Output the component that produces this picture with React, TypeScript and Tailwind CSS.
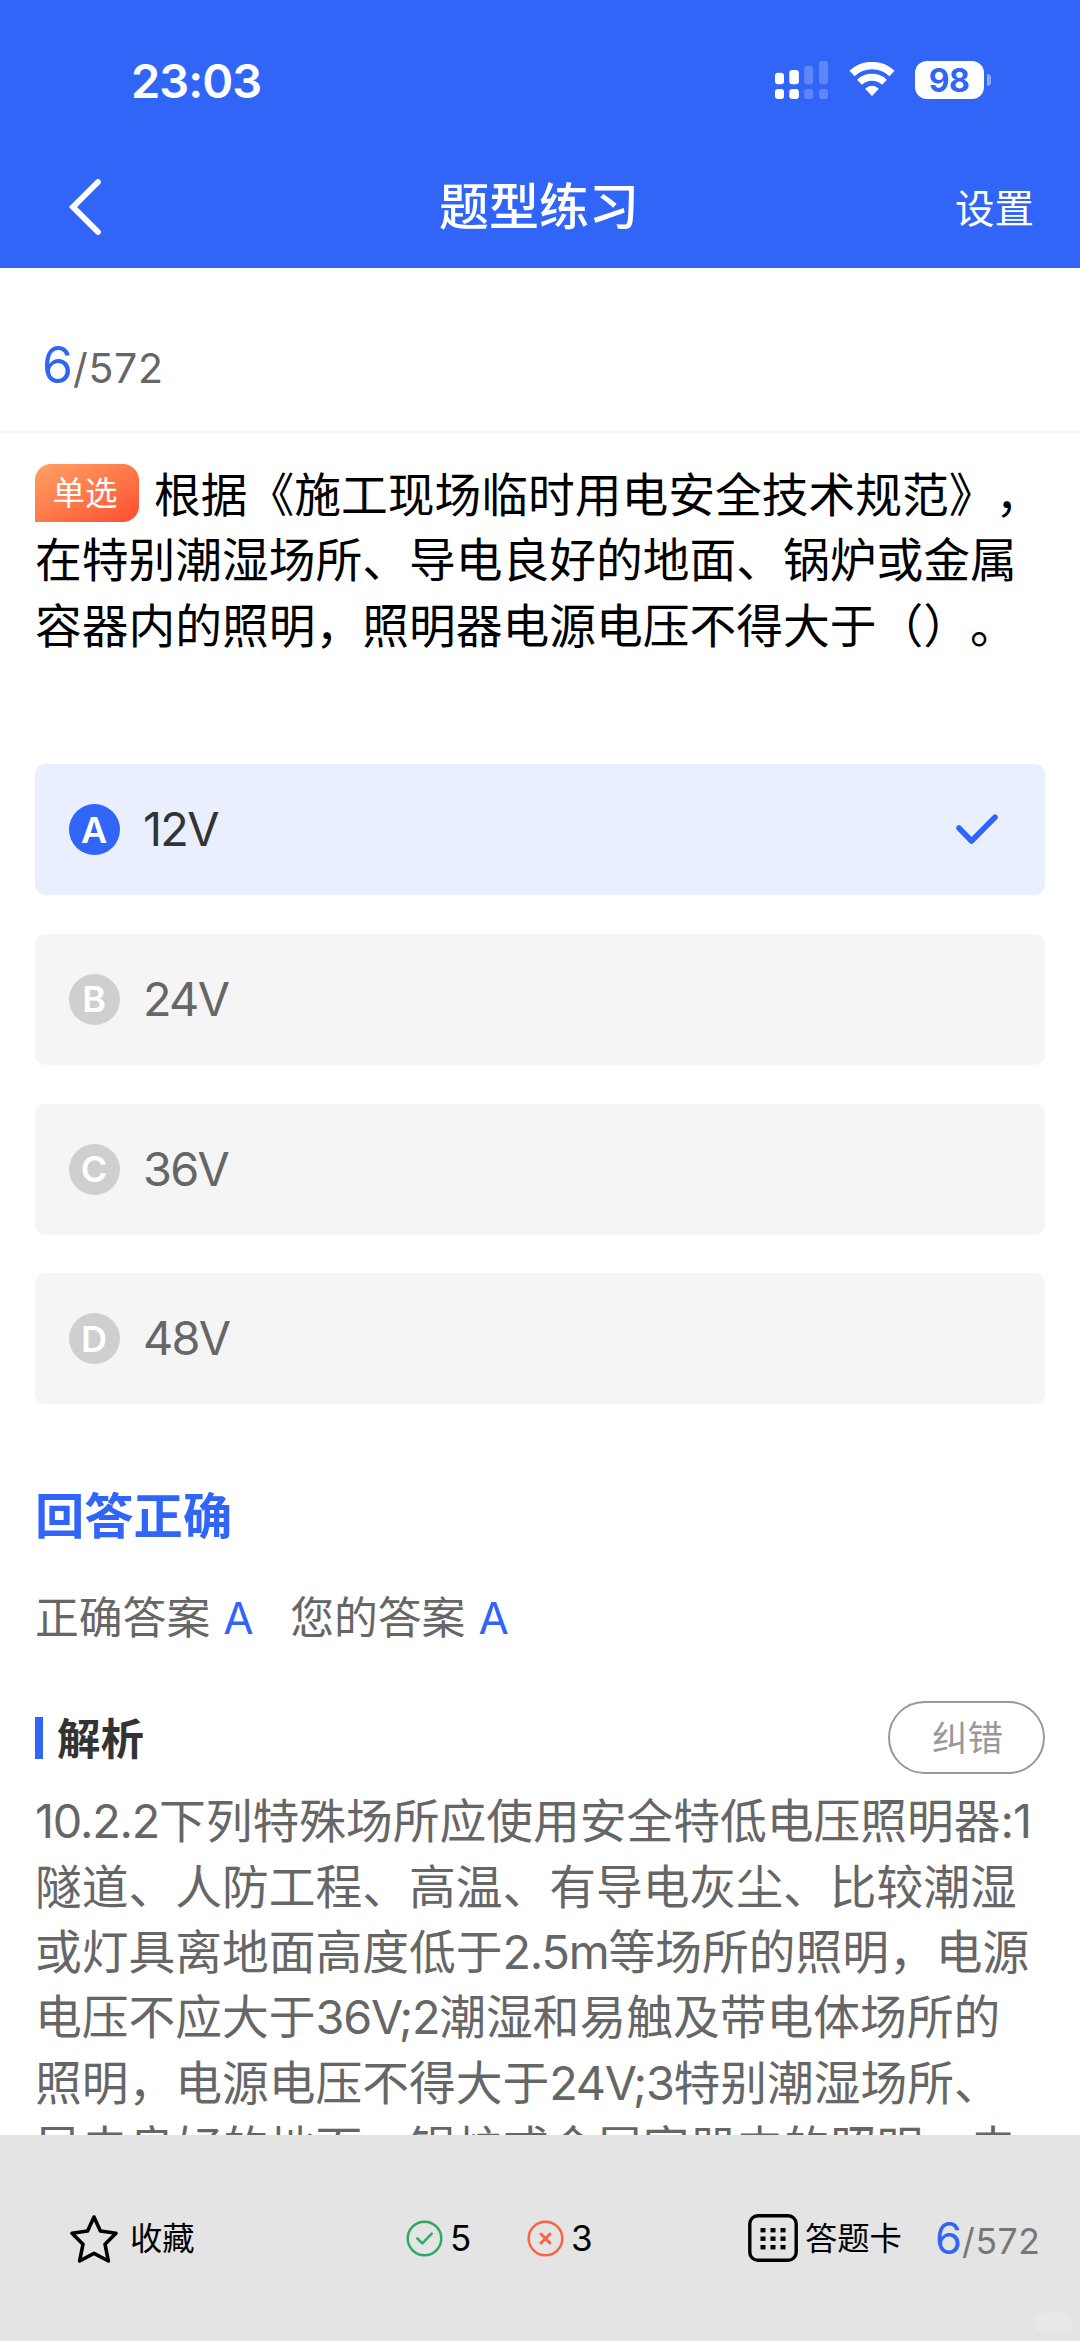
import React from 'react';

const options = [
  { key: 'A', label: '12V', selected: true },
  { key: 'B', label: '24V', selected: false },
  { key: 'C', label: '36V', selected: false },
  { key: 'D', label: '48V', selected: false },
];

const questionLines = [
  '在特别潮湿场所、导电良好的地面、锅炉或金属',
  '容器内的照明，照明器电源电压不得大于（）。',
];

const analysisLines = [
  '10.2.2下列特殊场所应使用安全特低电压照明器:1',
  '隧道、人防工程、高温、有导电灰尘、比较潮湿',
  '或灯具离地面高度低于2.5m等场所的照明，电源',
  '电压不应大于36V;2潮湿和易触及带电体场所的',
  '照明，电源电压不得大于24V;3特别潮湿场所、',
  '导电良好的地面、锅炉或金属容器内的照明，电',
];

// tighten the latin runs, they sit too wide next to the hanzi
const MixedText = ({ text }: { text: string }) => (
  <>
    {text.split(/([\x21-\x7e]+)/).map((part, i) =>
      i % 2 === 1 ? (
        <span key={i} className="tracking-[-1.2px]">
          {part}
        </span>
      ) : (
        part
      )
    )}
  </>
);

const SignalIcon = () => (
  <svg width="53" height="38" viewBox="0 0 53 38" fill="#fff">
    <rect x="0" y="11.7" width="9" height="11.6" rx="3" />
    <rect x="14.3" y="9" width="9.6" height="14.3" rx="3" />
    <rect x="29.2" y="5" width="9" height="18.3" rx="3" opacity=".22" />
    <rect x="44" y="0" width="9" height="23.3" rx="3" opacity=".22" />
    <rect x="0" y="28" width="9" height="10" rx="3" />
    <rect x="14.3" y="28" width="9.6" height="10" rx="3" />
    <rect x="29.2" y="28" width="9" height="10" rx="3" opacity=".22" />
    <rect x="44" y="28" width="9" height="10" rx="3" opacity=".22" />
  </svg>
);

const WifiIcon = () => (
  <svg width="46" height="35" viewBox="0 0 46 35" fill="none">
    <path d="M3 11.5a29 29 0 0 1 40 0" stroke="#fff" strokeWidth="7.4" />
    <path d="M10.5 20.3a18.2 18.2 0 0 1 25 0" stroke="#fff" strokeWidth="7" />
    <path
      d="M16.7 26.8a9.2 9.2 0 0 1 12.6 0L23 33.6z"
      fill="#fff"
      stroke="#fff"
      strokeWidth="1"
      strokeLinejoin="round"
    />
  </svg>
);

const StatusBar = () => (
  <div className="flex h-[146px] items-start pl-[131px] pr-[89px] pt-[61px] text-white">
    <span className="text-[47px] font-semibold leading-[40px] tracking-[-1px]">
      23:03
    </span>
    <div className="ml-auto flex items-start">
      <SignalIcon />
      <div className="ml-[21px] mt-[1px]">
        <WifiIcon />
      </div>
      <div className="ml-[20px] flex items-center gap-[3px]">
        <div className="flex h-[38px] w-[69px] items-center justify-center rounded-[12px] bg-white pr-[1px] pt-[1px] text-[32px] font-bold leading-[38px] tracking-[-0.5px] text-[#3165f7]">
          98
        </div>
        <div className="h-[12px] w-[4px] rounded-r-full bg-white/45" />
      </div>
    </div>
  </div>
);

const NavBar = () => (
  <div className="flex h-[122px] items-center pl-[68px] pr-[46px] text-white">
    <svg className="mb-[1px]" width="34" height="56" viewBox="0 0 34 56" fill="none">
      <path d="M30 3 5 28l25 25" stroke="#fff" strokeWidth="5.8" strokeLinecap="round" />
    </svg>
    <h1 className="flex-1 pl-[21px] text-center text-[50px] font-medium leading-[60px]">
      题型练习
    </h1>
    <span className="pt-[3px] text-[39.5px] leading-[50px]">设置</span>
  </div>
);

const Option = ({ item }: { item: (typeof options)[number] }) => (
  <div
    className={
      item.selected
        ? 'flex h-[131px] items-center rounded-[10px] bg-[#e9effe] pl-[34px] pr-[47px] text-[#333]'
        : 'flex h-[131px] items-center rounded-[10px] bg-[#f5f5f5] pl-[34px] pr-[47px] text-[#666]'
    }
  >
    <span
      className={
        item.selected
          ? 'flex size-[51px] items-center justify-center rounded-full bg-[#3165f7] pr-[1px] text-[36px] font-semibold text-white'
          : 'flex size-[51px] items-center justify-center rounded-full bg-[#d0cfcf] pr-[1px] text-[36px] font-semibold text-white'
      }
    >
      {item.key}
    </span>
    <span className="ml-[23px] pb-[1px] text-[46.8px] leading-[60px] tracking-[-1.7px]">
      {item.label}
    </span>
    {item.selected && (
      <svg className="ml-auto" width="42" height="31" viewBox="0 0 42 31" fill="none">
        <path
          d="M3 14 15.5 27 39 3.2"
          stroke="#3165f7"
          strokeWidth="5.6"
          strokeLinecap="round"
          strokeLinejoin="round"
        />
      </svg>
    )}
  </div>
);

const BottomBar = () => (
  <footer className="relative flex h-[206px] items-start bg-[#e4e4e4] pl-[70px] pt-[79px] text-black">
    <div className="flex h-[48px] items-center">
      <svg width="48" height="49" viewBox="0 0 48 49" fill="none">
        <path
          d="M24 3 30.4 17 46 19.3 35 30.2 38.4 47 24 39.4 9.6 47 13 30.2 2 19.3 17.6 17z"
          stroke="#000"
          strokeWidth="3.6"
          strokeLinejoin="round"
        />
      </svg>
      <span className="ml-[12px] w-[212px] pt-[2px] text-[32.3px] leading-[48px]">收藏</span>
    </div>
    <div className="flex h-[48px] items-center">
      <svg className="ml-[64px]" width="37" height="37" viewBox="0 0 37 37" fill="none">
        <circle cx="18.5" cy="18.5" r="16.8" stroke="#2fa860" strokeWidth="2.5" />
        <path
          d="m11.3 18.3 5 5 9.5-9.6"
          stroke="#2fa860"
          strokeWidth="2.5"
          strokeLinecap="round"
          strokeLinejoin="round"
        />
      </svg>
      <span className="ml-[7px] w-[77px] text-[35px] leading-[48px]">5</span>
      <svg width="37" height="37" viewBox="0 0 37 37" fill="none">
        <circle cx="18.5" cy="18.5" r="16.8" stroke="#fb6344" strokeWidth="2.5" />
        <path
          d="m14 14 9 9m0-9-9 9"
          stroke="#fb6344"
          strokeWidth="3"
          strokeLinecap="round"
        />
      </svg>
      <span className="ml-[7px] w-[177px] text-[35px] leading-[48px]">3</span>
    </div>
    <div className="flex h-[48px] items-center">
      <svg width="50" height="48" viewBox="0 0 50 48" fill="none">
        <rect x="1.8" y="1.8" width="46.4" height="44.4" rx="8" stroke="#000" strokeWidth="3.4" />
        {[13, 23, 33].map((x) =>
          [14, 22.5, 31].map((y) => (
            <rect key={`${x}-${y}`} x={x - 0.5} y={y} width="5" height="4.4" fill="#000" />
          ))
        )}
      </svg>
      <span className="ml-[7px] w-[130px] pt-[2px] text-[32.3px] leading-[48px]">答题卡</span>
    </div>
    <div className="flex h-[48px] items-baseline text-[#777]">
      <span className="text-[43.5px] leading-[48px] text-[#3165f7]">6</span>
      <span className="text-[35.5px] leading-[48px] tracking-[0.6px]">/572</span>
    </div>
    <div className="absolute bottom-[8px] right-[8px] h-[20px] w-[37px] rounded-[8px] bg-white/15" />
  </footer>
);

const App = () => {
  return (
    <div
      lang="zh-CN"
      className="flex h-[2341px] w-[1080px] flex-col overflow-hidden bg-white font-['Inter','Noto_Sans_CJK_SC',sans-serif] [text-spacing-trim:space-all]"
    >
      <header className="h-[268px] shrink-0 bg-[#3165f7]">
        <StatusBar />
        <NavBar />
      </header>

      <div className="flex h-[165px] shrink-0 items-baseline border-b-2 border-[#f7f7f7] pl-[42px] pt-[62px] text-[#666]">
        <span className="text-[50px] leading-[70px] text-[#3165f7]">6</span>
        <span className="text-[41px] leading-[70px] tracking-[0.7px]">/572</span>
      </div>

      <main className="h-[1702px] shrink-0 overflow-hidden px-[35px] pt-[30px]">
        <div className="whitespace-nowrap text-[46.75px] leading-[65.4px] text-black">
          <div className="flex h-[65.4px] items-center">
            <span className="mb-[5px] mr-[15px] flex h-[58px] w-[104px] items-center justify-center rounded-[16px] rounded-bl-none bg-linear-to-br from-[#ffa063] to-[#ff4a30] pr-[4px] pt-[1px] text-[32.5px] leading-[57px] text-white">
              单选
            </span>
            <span>根据《施工现场临时用电安全技术规范》，</span>
          </div>
          {questionLines.map((line) => (
            <p key={line}>{line}</p>
          ))}
        </div>

        <div className="mt-[105px] flex flex-col gap-[38.7px]">
          {options.map((item) => (
            <Option key={item.key} item={item} />
          ))}
        </div>

        <h2 className="mt-[82px] text-[49.3px] font-bold leading-[60px] text-[#3165f7]">
          回答正确
        </h2>

        <div className="mt-[42px] flex items-baseline text-[43.8px] leading-[60px] text-[#666]">
          <span>正确答案</span>
          <span className="ml-[13px] w-[67px] text-[44px] text-[#3165f7]">A</span>
          <span>您的答案</span>
          <span className="ml-[13px] text-[44px] text-[#3165f7]">A</span>
        </div>

        <div className="mt-[52px] flex h-[73px] items-center">
          <div className="h-[42px] w-[8px] bg-[#3165f7]" />
          <h3 className="ml-[14px] pt-[2px] text-[43.5px] font-bold leading-[60px] text-[#333]">
            解析
          </h3>
          <button className="ml-auto h-[73px] w-[157px] rounded-full border-2 border-[#999] pl-[2px] pt-[2px] text-[35.5px] leading-[60px] text-[#999]">
            纠错
          </button>
        </div>

        <div className="mt-[15px] whitespace-nowrap text-[46.75px] leading-[65.4px] text-[#666]">
          {analysisLines.map((line) => (
            <p key={line}>
              <MixedText text={line} />
            </p>
          ))}
        </div>
      </main>

      <BottomBar />
    </div>
  );
};

export default App;
